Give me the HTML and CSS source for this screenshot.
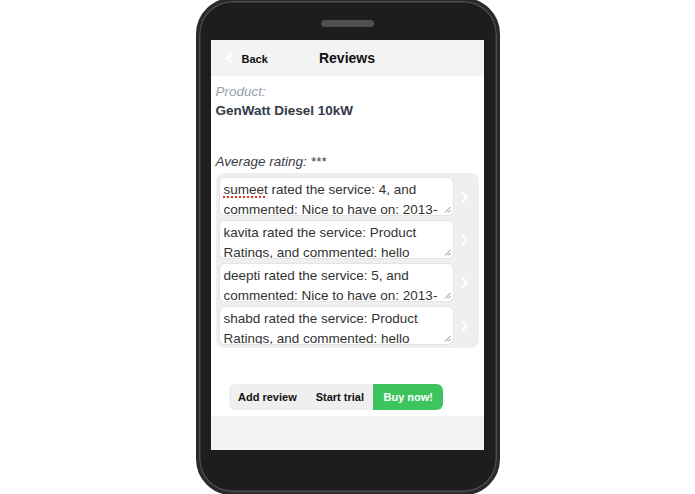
FILE: index.html
```
<!DOCTYPE html>
<html>
<head>
<meta charset="utf-8">
<link rel="stylesheet" href="styles.css">
</head>
<body>
<div class="phone">
  <div class="speaker"></div>
  <div class="screen">
    <header class="bar">
      <a class="back">
        <svg class="back-icon" width="6" height="10" viewBox="0 0 6 10"><polyline points="5,1 1.5,5 5,9" fill="none" stroke="#ffffff" stroke-width="2.2" stroke-linecap="round" stroke-linejoin="round"/></svg>
        <span>Back</span>
      </a>
      <h1 class="title">Reviews</h1>
      <span></span>
    </header>
    <main class="content">
      <p class="label">Product:</p>
      <p class="product">GenWatt Diesel 10kW</p>
      <p class="rating">Average rating: ***</p>
      <ul class="reviews">
        <li class="item">
          <div class="review"><span class="typo">sumeet</span> rated the service: 4, and<br>commented: Nice to have on: 2013-<svg class="grip" width="7" height="7" viewBox="0 0 7 7"><path d="M1 6.5 L6.5 1 M4 6.5 L6.5 4" stroke="#777" stroke-width="0.9"/></svg></div>
          <svg class="chev" width="6" height="10" viewBox="0 0 6 10"><polyline points="1,1 4.5,5 1,9" fill="none" stroke="#ffffff" stroke-width="2.2" stroke-linecap="round" stroke-linejoin="round"/></svg>
        </li>
        <li class="item">
          <div class="review">kavita rated the service: Product<br>Ratings, and commented: hello<svg class="grip" width="7" height="7" viewBox="0 0 7 7"><path d="M1 6.5 L6.5 1 M4 6.5 L6.5 4" stroke="#777" stroke-width="0.9"/></svg></div>
          <svg class="chev" width="6" height="10" viewBox="0 0 6 10"><polyline points="1,1 4.5,5 1,9" fill="none" stroke="#ffffff" stroke-width="2.2" stroke-linecap="round" stroke-linejoin="round"/></svg>
        </li>
        <li class="item">
          <div class="review">deepti rated the service: 5, and<br>commented: Nice to have on: 2013-<svg class="grip" width="7" height="7" viewBox="0 0 7 7"><path d="M1 6.5 L6.5 1 M4 6.5 L6.5 4" stroke="#777" stroke-width="0.9"/></svg></div>
          <svg class="chev" width="6" height="10" viewBox="0 0 6 10"><polyline points="1,1 4.5,5 1,9" fill="none" stroke="#ffffff" stroke-width="2.2" stroke-linecap="round" stroke-linejoin="round"/></svg>
        </li>
        <li class="item">
          <div class="review">shabd rated the service: Product<br>Ratings, and commented: hello<svg class="grip" width="7" height="7" viewBox="0 0 7 7"><path d="M1 6.5 L6.5 1 M4 6.5 L6.5 4" stroke="#777" stroke-width="0.9"/></svg></div>
          <svg class="chev" width="6" height="10" viewBox="0 0 6 10"><polyline points="1,1 4.5,5 1,9" fill="none" stroke="#ffffff" stroke-width="2.2" stroke-linecap="round" stroke-linejoin="round"/></svg>
        </li>
      </ul>
      <div class="actions">
        <button class="btn">Add review</button>
        <button class="btn">Start trial</button>
        <button class="btn btn-buy">Buy now!</button>
      </div>
    </main>
    <footer class="foot"></footer>
  </div>
</div>
</body>
</html>
```
FILE: styles.css
```
html, body {
  margin: 0;
  padding: 0;
  background: #ffffff;
}
body {
  display: flex;
  justify-content: center;
  font-family: "Liberation Sans", Helvetica, Arial, sans-serif;
  height: 494px;
  overflow: hidden;
}
.phone {
  margin-top: -2px;
  width: 304px;
  height: 497px;
  box-sizing: border-box;
  border: 3px solid #2a2a2a;
  border-radius: 36px;
  background: #1d1d1d;
  box-shadow: inset 0 0 0 1.5px #4d4d4d;
  padding: 19px 13px 0 12px;
  flex-shrink: 0;
}
.speaker {
  width: 53px;
  height: 7px;
  border-radius: 4px;
  background: #505050;
  margin: 0 auto 13px;
}
.screen {
  height: 410px;
  background: #ffffff;
  display: flex;
  flex-direction: column;
}
.bar {
  height: 36px;
  flex-shrink: 0;
  background: #f3f3f3;
  display: grid;
  grid-template-columns: 1fr auto 1fr;
  align-items: center;
}
.back {
  display: flex;
  align-items: center;
  padding-left: 15px;
  font-size: 11px;
  font-weight: bold;
  color: #111;
}
.back-icon {
  margin-right: 10px;
  margin-top: -1px;
}
.back span {
  margin-top: 2px;
}
.title {
  margin: 0;
  font-size: 14px;
  font-weight: bold;
  color: #111;
}
.content {
  flex: 1;
  padding: 6px 0 0 5px;
}
.content p {
  margin: 0;
  font-size: 13.5px;
  line-height: 19px;
}
.label {
  font-style: italic;
  color: #98a0aa;
}
.product {
  font-weight: bold;
  color: #343b46;
}
.content .rating {
  margin-top: 32px;
  font-style: italic;
  color: #373e48;
}
.reviews {
  list-style: none;
  margin: 2px 0 0;
  padding: 4px 0 3px 3px;
  width: 263px;
  box-sizing: border-box;
  background: #efefef;
  border-radius: 8px;
}
.item {
  display: flex;
  align-items: center;
}
.item + .item {
  margin-top: 4px;
}
.review {
  position: relative;
  width: 235px;
  height: 39px;
  box-sizing: border-box;
  background: #ffffff;
  border: 1px solid #e4e4e4;
  border-radius: 6px;
  padding: 2px 4px;
  overflow: hidden;
  font-size: 13.5px;
  line-height: 20px;
  color: #333333;
  white-space: nowrap;
}
.typo {
  text-decoration: underline dotted #e0302a;
  text-decoration-thickness: 1.5px;
  text-underline-offset: 2px;
}
.grip {
  position: absolute;
  right: 2px;
  bottom: 2px;
}
.chev {
  margin-left: 8px;
}
.actions {
  display: inline-flex;
  margin: 36px 0 0 13px;
  height: 26px;
  background: #efefef;
  border-radius: 6px;
  overflow: hidden;
}
.btn {
  border: 0;
  background: transparent;
  font-family: "Liberation Sans", Helvetica, Arial, sans-serif;
  font-size: 11px;
  font-weight: bold;
  color: #111111;
  padding: 0 9.5px;
  height: 26px;
}
.btn-buy {
  background: #3ec45f;
  color: #ffffff;
  padding: 0 10px;
  border-radius: 0 6px 6px 0;
}
.foot {
  height: 34px;
  flex-shrink: 0;
  background: #f3f3f3;
}
```
